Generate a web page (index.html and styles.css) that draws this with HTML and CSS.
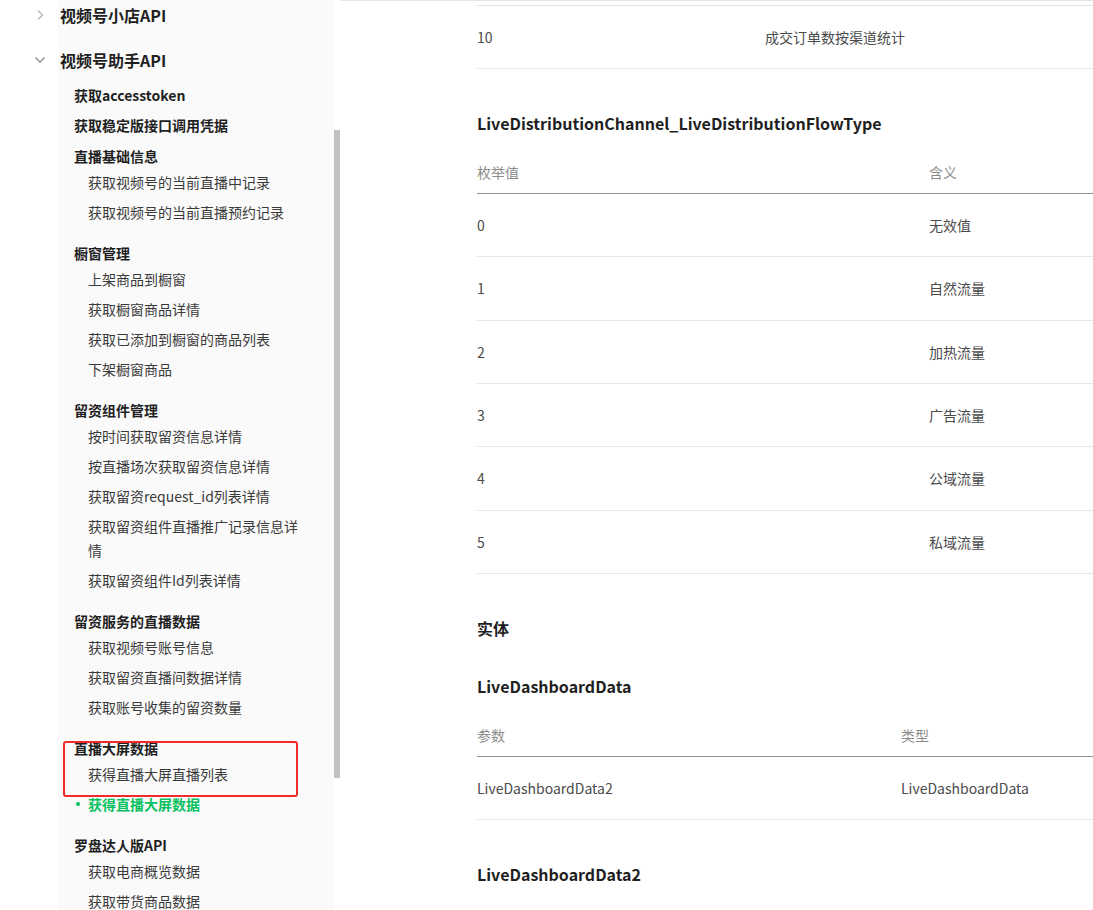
FILE: index.html
```html
<!DOCTYPE html>
<html lang="zh-CN">
<head>
<meta charset="utf-8">
<title>视频号助手API</title>
<link rel="stylesheet" href="styles.css">
</head>
<body>
<div class="page">
  <aside class="sidebar">
    <ul class="tree">
      <li class="top">
        <div class="top-row">
          <svg class="chev" width="10" height="12" viewBox="0 0 10 12"><path d="M3 1.5 L7.5 6 L3 10.5" fill="none" stroke="#b5b5b5" stroke-width="1.3"/></svg>
          <span class="top-label">视频号小店API</span>
        </div>
      </li>
      <li class="top open">
        <div class="top-row">
          <svg class="chev" width="10" height="12" viewBox="0 0 10 12"><path d="M0.5 3.5 L5 8 L9.5 3.5" fill="none" stroke="#8a8a8a" stroke-width="1.3"/></svg>
          <span class="top-label">视频号助手API</span>
        </div>
        <ul class="sub">
          <li class="leaf">获取accesstoken</li>
          <li class="leaf">获取稳定版接口调用凭据</li>
          <li class="group">
            <div class="group-title">直播基础信息</div>
            <ul class="items">
              <li>获取视频号的当前直播中记录</li>
              <li>获取视频号的当前直播预约记录</li>
            </ul>
          </li>
          <li class="group">
            <div class="group-title">橱窗管理</div>
            <ul class="items">
              <li>上架商品到橱窗</li>
              <li>获取橱窗商品详情</li>
              <li>获取已添加到橱窗的商品列表</li>
              <li>下架橱窗商品</li>
            </ul>
          </li>
          <li class="group">
            <div class="group-title">留资组件管理</div>
            <ul class="items">
              <li>按时间获取留资信息详情</li>
              <li>按直播场次获取留资信息详情</li>
              <li>获取留资request_id列表详情</li>
              <li>获取留资组件直播推广记录信息详情</li>
              <li>获取留资组件Id列表详情</li>
            </ul>
          </li>
          <li class="group">
            <div class="group-title">留资服务的直播数据</div>
            <ul class="items">
              <li>获取视频号账号信息</li>
              <li>获取留资直播间数据详情</li>
              <li>获取账号收集的留资数量</li>
            </ul>
          </li>
          <li class="group">
            <div class="group-title">直播大屏数据</div>
            <ul class="items">
              <li>获得直播大屏直播列表</li>
              <li class="active">获得直播大屏数据</li>
            </ul>
          </li>
          <li class="group">
            <div class="group-title">罗盘达人版API</div>
            <ul class="items">
              <li>获取电商概览数据</li>
              <li>获取带货商品数据</li>
            </ul>
          </li>
        </ul>
      </li>
    </ul>
    <div class="thumb"></div>
    <div class="mark"></div>
  </aside>

  <main class="main">
    <table class="tbl t1">
      <tbody>
        <tr><td class="c1">10</td><td>成交订单数按渠道统计</td></tr>
      </tbody>
    </table>

    <h4 class="title">LiveDistributionChannel_LiveDistributionFlowType</h4>
    <table class="tbl t2">
      <thead>
        <tr><th class="c1">枚举值</th><th>含义</th></tr>
      </thead>
      <tbody>
        <tr><td>0</td><td>无效值</td></tr>
        <tr><td>1</td><td>自然流量</td></tr>
        <tr><td>2</td><td>加热流量</td></tr>
        <tr><td>3</td><td>广告流量</td></tr>
        <tr><td>4</td><td>公域流量</td></tr>
        <tr><td>5</td><td>私域流量</td></tr>
      </tbody>
    </table>

    <h3 class="title section">实体</h3>
    <h4 class="title sub-title">LiveDashboardData</h4>
    <table class="tbl t3">
      <thead>
        <tr><th class="c1">参数</th><th>类型</th></tr>
      </thead>
      <tbody>
        <tr><td>LiveDashboardData2</td><td>LiveDashboardData</td></tr>
      </tbody>
    </table>

    <h4 class="title">LiveDashboardData2</h4>
  </main>
</div>
</body>
</html>
```

FILE: styles.css
```css
* { box-sizing: border-box; }

html, body {
  margin: 0;
  padding: 0;
  background: #fff;
}

body {
  width: 1093px;
  height: 910px;
  overflow: hidden;
  font-family: "Noto Sans CJK SC", "Liberation Sans", sans-serif;
  color: #353535;
}

ul { list-style: none; margin: 0; padding: 0; }

.page {
  display: flex;
  height: 910px;
}

/* ---------- sidebar ---------- */
.sidebar {
  position: relative;
  width: 340px;
  flex: none;
  background: linear-gradient(to right, #fff 58px, #fafafa 58px, #fafafa 334px, #fff 334px);
}

.tree { padding-left: 35px; }

.top + .top { margin-top: 15px; }

.top-row {
  display: flex;
  align-items: center;
  height: 30px;
}

.chev { flex: none; display: block; }

.top-label {
  margin-left: 15px;
  font-size: 16px;
  font-weight: 700;
  color: #1f1f1f;
  line-height: 30px;
}

.sub {
  margin-top: 5px;
  padding-left: 39px;
  width: 268px;
}

.leaf {
  height: 30px;
  line-height: 30px;
  font-size: 14px;
  font-weight: 700;
  color: #1f1f1f;
}

.leaf + .group { margin-top: 5px; }

.group { padding-bottom: 15px; }

.group-title {
  height: 22px;
  line-height: 22px;
  font-size: 14px;
  font-weight: 700;
  color: #1f1f1f;
}

.items { padding-left: 14px; }

.items li {
  padding: 3px 0;
  line-height: 24px;
  font-size: 14px;
  color: #3a3a3a;
}

.items li.active {
  color: #07c160;
  font-weight: 700;
}

.items li.active::before {
  content: "";
  display: inline-block;
  width: 4px;
  height: 4px;
  border-radius: 50%;
  background: #07c160;
  margin-left: -12px;
  margin-right: 8px;
  vertical-align: middle;
  position: relative;
  top: -2px;
}

.thumb {
  position: absolute;
  left: 334px;
  top: 130px;
  width: 6px;
  height: 648px;
  background: #c1c1c1;
}

.mark {
  position: absolute;
  left: 63px;
  top: 741px;
  width: 235px;
  height: 56px;
  border: 2px solid #f32a2a;
  border-radius: 3px;
}

/* ---------- main ---------- */
.main {
  flex: 1;
  min-width: 0;
  overflow: hidden;
  border-top: 1px solid #e6e6e6;
  padding-left: 137px;
}

.tbl {
  border-collapse: collapse;
  width: 760px;
  font-size: 14px;
}

.tbl th {
  text-align: left;
  font-weight: 400;
  color: #8c8c8c;
  padding: 10px 0;
  line-height: 22px;
  border-bottom: 1px solid #8f8f8f;
}

.tbl td {
  padding: 20px 0;
  line-height: 22.33px;
  color: #4a4a4a;
  border-bottom: 1px solid #e6e6e6;
}

.t1 { margin-top: 4px; border-top: 1px solid #e6e6e6; }
.t1 td { line-height: 22px; }
.t1 .c1 { width: 288px; }
.t2 .c1 { width: 452px; }
.t3 .c1 { width: 424px; }

.title {
  margin: 42px 0 16px;
  font-size: 16px;
  line-height: 24px;
  font-weight: 700;
  color: #1f1f1f;
}

.section { margin-bottom: 34px; }
.sub-title { margin-top: 0; }
```
